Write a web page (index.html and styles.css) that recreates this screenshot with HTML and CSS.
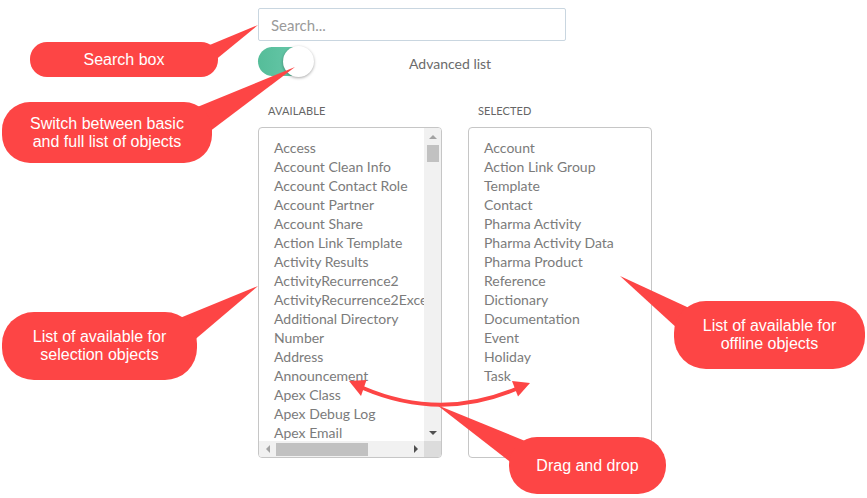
FILE: index.html
```html
<!DOCTYPE html>
<html lang="en">
<head>
<meta charset="utf-8">
<title>Offline objects</title>
<link rel="stylesheet" href="styles.css">
</head>
<body>
<div class="page">
  <main class="panel">
    <input class="search" type="text" placeholder="Search...">
    <div class="toggle-row">
      <span class="switch"><span class="knob"></span></span>
      <span class="toggle-label">Advanced list</span>
    </div>
    <div class="lists">
      <section class="col">
        <h3 class="col-title">Available</h3>
        <div class="box box-scroll">
          <ul class="items">
            <li>Access</li>
            <li>Account Clean Info</li>
            <li>Account Contact Role</li>
            <li>Account Partner</li>
            <li>Account Share</li>
            <li>Action Link Template</li>
            <li>Activity Results</li>
            <li>ActivityRecurrence2</li>
            <li>ActivityRecurrence2Exception</li>
            <li>Additional Directory</li>
            <li>Number</li>
            <li>Address</li>
            <li>Announcement</li>
            <li>Apex Class</li>
            <li>Apex Debug Log</li>
            <li>Apex Email</li>
          </ul>
          <div class="vscroll">
            <span class="sb-btn"><span class="tri tri-up"></span></span>
            <span class="thumb-v"></span>
            <span class="sb-fill"></span>
            <span class="sb-btn"><span class="tri tri-down"></span></span>
          </div>
          <div class="hscroll">
            <span class="sb-btn"><span class="tri tri-left"></span></span>
            <span class="thumb-h"></span>
            <span class="sb-fill"></span>
            <span class="sb-btn"><span class="tri tri-right"></span></span>
          </div>
          <div class="sb-corner"></div>
        </div>
      </section>
      <section class="col">
        <h3 class="col-title">Selected</h3>
        <div class="box">
          <ul class="items">
            <li>Account</li>
            <li>Action Link Group</li>
            <li>Template</li>
            <li>Contact</li>
            <li>Pharma Activity</li>
            <li>Pharma Activity Data</li>
            <li>Pharma Product</li>
            <li>Reference</li>
            <li>Dictionary</li>
            <li>Documentation</li>
            <li>Event</li>
            <li>Holiday</li>
            <li>Task</li>
          </ul>
        </div>
      </section>
    </div>
  </main>

  <svg class="annotations" width="867" height="498" viewBox="0 0 867 498" aria-hidden="true">
    <g fill="#fd4545">
      <polygon points="200,49 258,25 208,66"/>
      <polygon points="190,110 295,67 205,135"/>
      <polygon points="175,320 258,286 185,348"/>
      <polygon points="700,313 620,276 690,340"/>
      <polygon points="530,443 437,405 518,468"/>
      <polygon points="349,381 366.5,380 361,396"/>
      <polygon points="530,383 512,381 518,396.5"/>
    </g>
    <path d="M363 388 Q440 421 516 389" fill="none" stroke="#fd4545" stroke-width="4" stroke-linecap="round"/>
  </svg>

  <div class="callout c-search">Search box</div>
  <div class="callout c-switch">Switch between basic<br>and full list of objects</div>
  <div class="callout c-avail">List of available for<br>selection objects</div>
  <div class="callout c-offline">List of available for<br>offline objects</div>
  <div class="callout c-drag">Drag and drop</div>
</div>
</body>
</html>
```

FILE: styles.css
```css
* { box-sizing: border-box; }

html, body {
  margin: 0;
  padding: 0;
  background: #ffffff;
}

.page {
  position: relative;
  width: 867px;
  height: 498px;
  overflow: hidden;
  font-family: Lato, "Open Sans", sans-serif;
}

.panel {
  padding: 8px 0 0 258px;
}

.search {
  display: block;
  width: 308px;
  height: 33px;
  margin: 0;
  padding: 0 12px;
  border: 1px solid #c9d6e0;
  border-radius: 2px;
  font-family: Lato, sans-serif;
  font-size: 15px;
  color: #555;
  outline: none;
  background: #fff;
}
.search::placeholder { color: #9a9a9a; }

.toggle-row {
  display: flex;
  align-items: center;
  margin-top: 5px;
  height: 31px;
}

.switch {
  position: relative;
  display: block;
  width: 56px;
  height: 31px;
  flex: none;
}
.switch::before {
  content: "";
  position: absolute;
  left: 0;
  top: 1px;
  width: 50px;
  height: 29px;
  border-radius: 15px;
  background: linear-gradient(90deg, #55bd99, #6ccaad);
}
.knob {
  position: absolute;
  right: 0;
  top: 0;
  width: 31px;
  height: 31px;
  border-radius: 50%;
  background: #fff;
  box-shadow: 0 1px 3px rgba(0, 0, 0, 0.35);
}

.toggle-label {
  margin-left: 95px;
  margin-top: 3px;
  font-size: 14px;
  color: #6b6b6b;
}

.lists {
  display: flex;
  gap: 26px;
  margin-top: 27px;
}

.col-title {
  margin: 0 0 9px;
  padding-left: 10px;
  font-size: 11px;
  line-height: 14px;
  font-weight: 400;
  letter-spacing: 0.1px;
  text-transform: uppercase;
  color: #666;
}

.box {
  width: 184px;
  height: 331px;
  border: 1px solid #c6c6c6;
  border-radius: 4px;
  overflow: hidden;
  background: #fff;
}

.box-scroll {
  display: grid;
  grid-template-columns: 1fr 17px;
  grid-template-rows: 1fr 16px;
}

.items {
  list-style: none;
  margin: 0;
  padding: 10px 0 0 15px;
  font-size: 14px;
  line-height: 19px;
  color: #7b7b7b;
  white-space: nowrap;
  overflow: hidden;
}

.vscroll {
  display: flex;
  flex-direction: column;
  align-items: center;
  background: #f1f1f1;
}
.hscroll {
  display: flex;
  align-items: center;
  background: #f1f1f1;
}
.sb-corner { background: #dcdcdc; }

.sb-btn {
  display: flex;
  align-items: center;
  justify-content: center;
  width: 17px;
  height: 17px;
  flex: none;
}
.hscroll .sb-btn { height: 16px; }
.sb-fill { flex: 1; }

.thumb-v {
  width: 12px;
  height: 17px;
  background: #c1c1c1;
  flex: none;
}
.thumb-h {
  width: 92px;
  height: 13px;
  background: #c1c1c1;
  flex: none;
}

.tri { width: 0; height: 0; }
.tri-up {
  border-left: 4px solid transparent;
  border-right: 4px solid transparent;
  border-bottom: 4px solid #a3a3a3;
}
.tri-down {
  border-left: 4px solid transparent;
  border-right: 4px solid transparent;
  border-top: 4px solid #505050;
}
.tri-left {
  border-top: 4px solid transparent;
  border-bottom: 4px solid transparent;
  border-right: 4px solid #a3a3a3;
}
.tri-right {
  border-top: 4px solid transparent;
  border-bottom: 4px solid transparent;
  border-left: 4px solid #505050;
}

.annotations {
  position: absolute;
  left: 0;
  top: 0;
  pointer-events: none;
}

.callout {
  position: absolute;
  display: flex;
  align-items: center;
  justify-content: center;
  text-align: center;
  background: #fd4545;
  color: #fff;
  font-family: "Liberation Sans", Arial, sans-serif;
  font-size: 16px;
  line-height: 18px;
}
.c-search { left: 30px; top: 42px; width: 188px; height: 35px; border-radius: 17px; }
.c-switch { left: 2px; top: 102px; width: 210px; height: 61px; border-radius: 28px; }
.c-avail { left: 2px; top: 312px; width: 195px; height: 68px; border-radius: 32px; }
.c-offline { left: 674px; top: 301px; width: 191px; height: 68px; border-radius: 32px; }
.c-drag { left: 509px; top: 437px; width: 157px; height: 57px; border-radius: 28px; }
```
